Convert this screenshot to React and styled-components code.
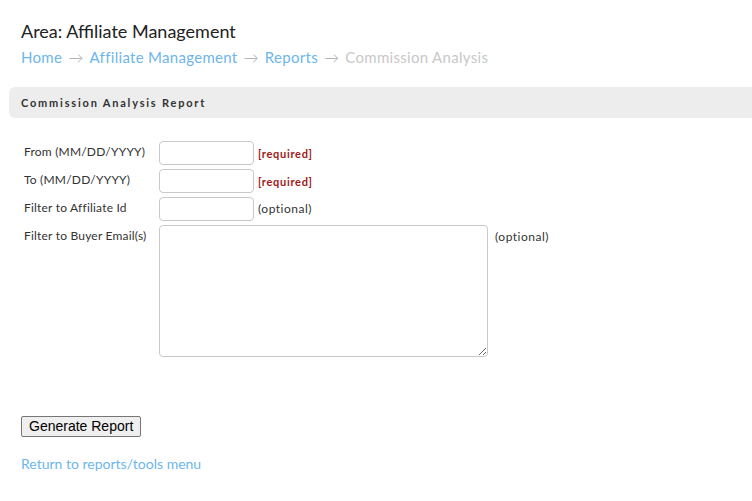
import React from "react";
import styled, { createGlobalStyle } from "styled-components";

const Global = createGlobalStyle`
  html, body { margin: 0; padding: 0; background: #fff; }
  body { font-family: Lato, "Open Sans", sans-serif; color: #333; overflow-x: hidden; }
`;

const Page = styled.div`
  padding: 19px 0 30px 0;
`;

const Title = styled.h1`
  margin: 0 0 0 21px;
  font-size: 18px;
  font-weight: 400;
  color: #222;
  line-height: 24px;
`;

const Crumbs = styled.nav`
  margin: 4px 0 0 21px;
  font-size: 15px;
  line-height: 20px;
  letter-spacing: 0.3px;
  display: flex;
  align-items: center;
`;

const Crumb = styled.a`
  color: ${(p) => (p.$current ? "#c8c8c8" : "#6db6ec")};
  text-decoration: none;
`;

const Arrow = styled.span`
  color: #a8a8a8;
  margin: 0 6px;
  font-weight: 300;
`;

const SectionBar = styled.div`
  margin: 20px -20px 0 9px;
  height: 31px;
  background: #ededed;
  border-radius: 6px;
  display: flex;
  align-items: center;
  padding-left: 12px;
`;

const SectionTitle = styled.h2`
  margin: 0;
  font-size: 11px;
  font-weight: 700;
  letter-spacing: 1.8px;
  color: #333;
`;

const Form = styled.form`
  margin: 23px 0 0 24px;
  display: flex;
  flex-direction: column;
  gap: 4px;
`;

const Row = styled.div`
  display: flex;
  align-items: flex-start;
`;

const Label = styled.label`
  width: 135px;
  font-size: 12px;
  letter-spacing: 0.2px;
  color: #333;
  line-height: 16px;
  padding-top: 3px;
`;

const TextInput = styled.input`
  box-sizing: border-box;
  width: 95px;
  height: 24px;
  border: 1px solid #c9c9c9;
  border-radius: 4px;
  margin: 0;
  padding: 2px 4px;
  font-family: inherit;
`;

const TextArea = styled.textarea`
  box-sizing: border-box;
  width: 329px;
  height: 132px;
  border: 1px solid #c9c9c9;
  border-radius: 4px;
  margin: 0;
  padding: 2px 4px;
  font-family: inherit;
`;

const Note = styled.span`
  margin-left: ${(p) => (p.$wide ? "7px" : "4px")};
  padding-top: ${(p) => (p.$required ? "6px" : "5px")};
  line-height: 14px;
  font-size: ${(p) => (p.$required ? "11px" : "12px")};
  font-weight: ${(p) => (p.$required ? 700 : 400)};
  letter-spacing: ${(p) => (p.$required ? "0.7px" : "0.5px")};
  color: ${(p) => (p.$required ? "#a01818" : "#333")};
`;

const Actions = styled.div`
  margin: 58px 0 0 21px;
`;

const Button = styled.button`
  font-family: "Liberation Sans", Arial, sans-serif;
  font-size: 14px;
  height: 21px;
  padding: 0 7px;
  background: #efefef;
  border: 1px solid #767676;
  border-radius: 2px;
  color: #000;
`;

const BackLink = styled.a`
  display: block;
  margin: 18px 0 0 21px;
  font-size: 14px;
  color: #6db6ec;
  text-decoration: none;
  line-height: 18px;
`;

export default function App() {
  return (
    <>
      <Global />
      <Page>
        <Title>Area: Affiliate Management</Title>
        <Crumbs>
          <Crumb href="#">Home</Crumb>
          <Arrow>→</Arrow>
          <Crumb href="#">Affiliate Management</Crumb>
          <Arrow>→</Arrow>
          <Crumb href="#">Reports</Crumb>
          <Arrow>→</Arrow>
          <Crumb $current>Commission Analysis</Crumb>
        </Crumbs>
        <SectionBar>
          <SectionTitle>Commission Analysis Report</SectionTitle>
        </SectionBar>
        <Form onSubmit={(e) => e.preventDefault()}>
          <Row>
            <Label>From (MM/DD/YYYY)</Label>
            <TextInput type="text" />
            <Note $required>[required]</Note>
          </Row>
          <Row>
            <Label>To (MM/DD/YYYY)</Label>
            <TextInput type="text" />
            <Note $required>[required]</Note>
          </Row>
          <Row>
            <Label>Filter to Affiliate Id</Label>
            <TextInput type="text" />
            <Note>(optional)</Note>
          </Row>
          <Row>
            <Label>Filter to Buyer Email(s)</Label>
            <TextArea />
            <Note $wide>(optional)</Note>
          </Row>
        </Form>
        <Actions>
          <Button type="button">Generate Report</Button>
        </Actions>
        <BackLink href="#">Return to reports/tools menu</BackLink>
      </Page>
    </>
  );
}
